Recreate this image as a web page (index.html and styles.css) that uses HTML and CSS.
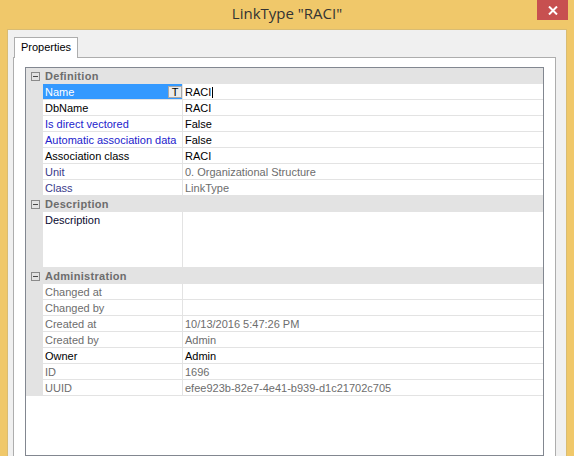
FILE: index.html
```html
<!DOCTYPE html>
<html>
<head>
<meta charset="utf-8">
<title>LinkType "RACI"</title>
<link rel="stylesheet" href="styles.css">
</head>
<body>
<div class="window">
  <div class="titlebar">
    <div></div>
    <div class="title">LinkType "RACI"</div>
    <div class="controls">
      <div class="close"><svg width="10" height="9" viewBox="0 0 10 9"><path d="M1 0.5 L9 8.5 M9 0.5 L1 8.5" stroke="#fff" stroke-width="2" fill="none"/></svg></div>
    </div>
  </div>
  <div class="client">
    <div class="tabs"><div class="tab">Properties</div></div>
    <div class="panel">
      <div class="grid">
        <div class="cat"><div class="cgut"><span class="box"><span class="minus"></span></span></div><div class="catlabel">Definition</div></div>
        <div class="row sel"><div class="gut"></div><div class="name"><span>Name</span><span class="tbtn">T</span></div><div class="val v-black">RACI<span class="caret"></span></div></div>
        <div class="row"><div class="gut"></div><div class="name l-black">DbName</div><div class="val v-black">RACI</div></div>
        <div class="row"><div class="gut"></div><div class="name l-blue">Is direct vectored</div><div class="val v-black">False</div></div>
        <div class="row"><div class="gut"></div><div class="name l-blue">Automatic association data</div><div class="val v-black">False</div></div>
        <div class="row"><div class="gut"></div><div class="name l-black">Association class</div><div class="val v-black">RACI</div></div>
        <div class="row"><div class="gut"></div><div class="name l-navy">Unit</div><div class="val v-gray">0. Organizational Structure</div></div>
        <div class="row"><div class="gut"></div><div class="name l-navy">Class</div><div class="val v-gray">LinkType</div></div>
        <div class="cat"><div class="cgut"><span class="box"><span class="minus"></span></span></div><div class="catlabel">Description</div></div>
        <div class="row tall"><div class="gut"></div><div class="name l-dark">Description</div><div class="val"></div></div>
        <div class="cat"><div class="cgut"><span class="box"><span class="minus"></span></span></div><div class="catlabel">Administration</div></div>
        <div class="row"><div class="gut"></div><div class="name l-gray">Changed at</div><div class="val"></div></div>
        <div class="row"><div class="gut"></div><div class="name l-gray">Changed by</div><div class="val"></div></div>
        <div class="row"><div class="gut"></div><div class="name l-gray">Created at</div><div class="val v-gray">10/13/2016 5:47:26 PM</div></div>
        <div class="row"><div class="gut"></div><div class="name l-gray">Created by</div><div class="val v-gray">Admin</div></div>
        <div class="row"><div class="gut"></div><div class="name l-black">Owner</div><div class="val v-black">Admin</div></div>
        <div class="row"><div class="gut"></div><div class="name l-gray">ID</div><div class="val v-gray">1696</div></div>
        <div class="row"><div class="gut"></div><div class="name l-gray">UUID</div><div class="val v-gray">efee923b-82e7-4e41-b939-d1c21702c705</div></div>
      </div>
    </div>
  </div>
</div>
</body>
</html>
```
FILE: styles.css
```css
html, body {
  margin: 0;
  padding: 0;
  width: 574px;
  height: 456px;
  overflow: hidden;
}
body {
  background: #F0C86A;
  font-family: "Liberation Sans", Arial, sans-serif;
  font-size: 11px;
}
.window {
  height: 456px;
  display: flex;
  flex-direction: column;
  overflow: hidden;
}
.titlebar {
  flex: none;
  height: 29px;
  display: grid;
  grid-template-columns: 1fr auto 1fr;
}
.title {
  font-family: "Open Sans", sans-serif;
  font-size: 15px;
  line-height: 27px;
  color: #333333;
  white-space: nowrap;
}
.controls {
  display: flex;
  justify-content: flex-end;
  align-items: flex-start;
}
.close {
  width: 31px;
  height: 20px;
  margin-right: 6px;
  background: #C75050;
  display: flex;
  align-items: center;
  justify-content: center;
}
.client {
  flex: none;
  margin: 0 7px;
  background: #F0F0F0;
  border: 1px solid #D9BC73;
  border-bottom: none;
  padding: 7px 10px 0 5px;
  display: flex;
  flex-direction: column;
}
.tabs {
  display: flex;
  padding-left: 1px;
}
.tab {
  position: relative;
  z-index: 1;
  width: 62px;
  height: 20px;
  margin-bottom: -1px;
  border: 1px solid #ADADAD;
  border-bottom: none;
  background: #FFFFFF;
  line-height: 18px;
  text-align: center;
  color: #000;
}
.panel {
  height: 420px;
  border: 1px solid #ADADAD;
  background: #FFFFFF;
  padding: 9px 11px;
}
.grid {
  box-sizing: border-box;
  height: 389px;
  border: 1px solid #828790;
  background: #FFFFFF;
}
.cat {
  display: flex;
  height: 16px;
  background: #E3E3E3;
}
.cgut {
  width: 17px;
  flex: none;
}
.box {
  box-sizing: border-box;
  width: 9px;
  height: 9px;
  margin: 4px 0 0 5px;
  border: 1px solid #8A8A8A;
  display: flex;
  align-items: center;
  justify-content: center;
}
.minus {
  width: 5px;
  height: 1px;
  background: #4A4A4A;
}
.catlabel {
  padding-left: 2px;
  font-weight: bold;
  line-height: 16px;
  color: #6D6D6D;
  letter-spacing: 0.3px;
}
.row {
  display: flex;
  height: 16px;
}
.row.tall {
  height: 56px;
}
.gut {
  width: 17px;
  flex: none;
  background: #E3E3E3;
}
.name {
  box-sizing: border-box;
  width: 139px;
  flex: none;
  display: flex;
  padding-left: 2px;
  border-bottom: 1px solid #E3E3E3;
  line-height: 17px;
  white-space: nowrap;
  overflow: hidden;
}
.val {
  flex: 1;
  padding-left: 2px;
  border-left: 1px solid #E3E3E3;
  border-bottom: 1px solid #E3E3E3;
  line-height: 17px;
  white-space: nowrap;
  overflow: hidden;
}
.sel .name {
  background: #3399FF;
  color: #FFFFFF;
}
.tbtn {
  box-sizing: border-box;
  margin-left: auto;
  width: 14px;
  height: 12px;
  margin-top: 2px;
  border: 1px solid #A8A8A8;
  background: #EBEBEB;
  color: #000;
  line-height: 11px;
  text-align: center;
}
.caret {
  display: inline-block;
  width: 1px;
  height: 11px;
  margin-left: 1px;
  background: #000;
  vertical-align: -2px;
}
.l-black { color: #000000; }
.l-blue { color: #2222CC; }
.l-navy { color: #3A3A8A; }
.l-dark { color: #0A0A30; }
.l-gray { color: #6D6D6D; }
.v-black { color: #000000; }
.v-gray { color: #6D6D6D; }
```
